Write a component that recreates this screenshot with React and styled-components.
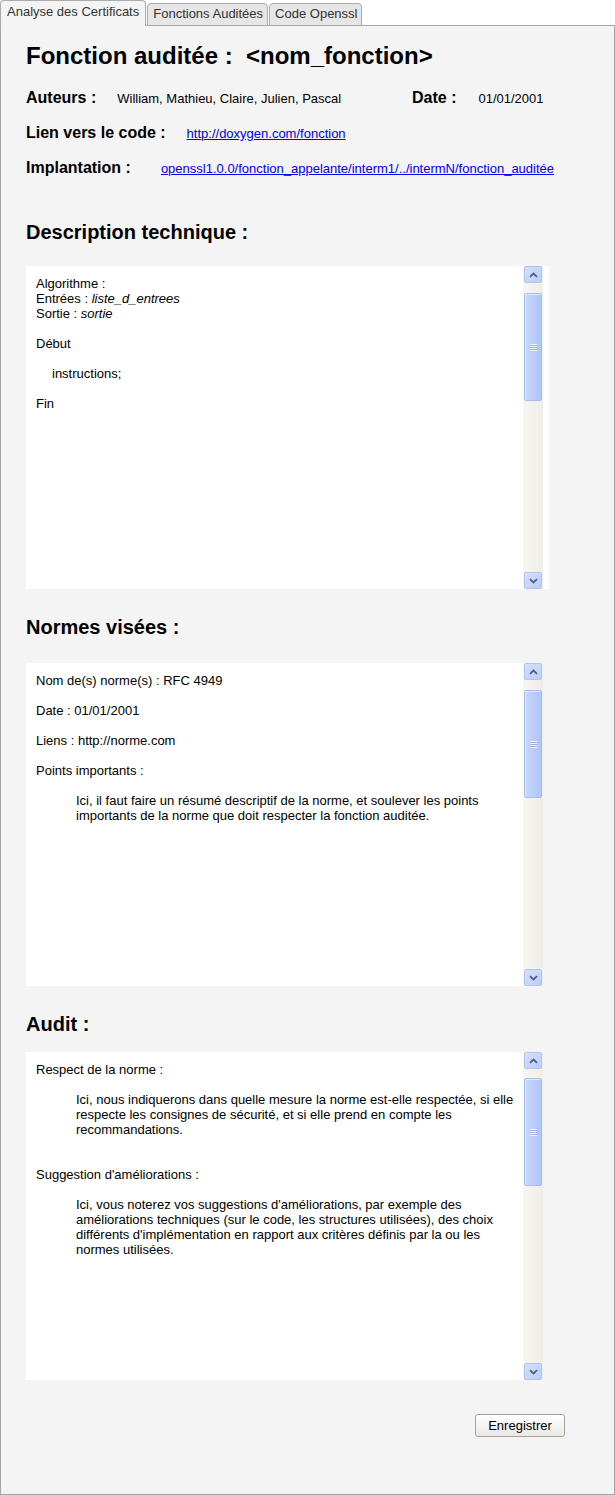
import React from "react";
import styled, { createGlobalStyle } from "styled-components";

const GlobalStyle = createGlobalStyle`
  html, body { margin: 0; padding: 0; background: #ffffff; }
  body { font-family: "Liberation Sans", Arial, sans-serif; color: #000; }
  * { box-sizing: border-box; }
`;

const Page = styled.div`
  width: 615px;
`;

const TabBar = styled.div`
  display: flex;
  align-items: flex-end;
  height: 26px;
  position: relative;
  z-index: 1;
  margin-bottom: -1px;
`;

const Tab = styled.div`
  height: ${(p) => (p.$active ? "26px" : "23px")};
  padding: 0 ${(p) => (p.$active ? "6px" : "4px")} 0 ${(p) => (p.$active ? "6px" : "5px")};
  border: 1px solid #aaaaaa;
  border-bottom: ${(p) => (p.$active ? "none" : "1px solid #aaaaaa")};
  border-radius: 4px 4px 0 0;
  background: ${(p) => (p.$active ? "#f4f4f4" : "#e6e6e6")};
  font-size: 13px;
  line-height: ${(p) => (p.$active ? "22px" : "20px")};
  color: #333;
  white-space: nowrap;
  margin-left: ${(p) => (p.$first ? "0" : "1px")};
`;

const Panel = styled.div`
  background: #f4f4f4;
  border: 1px solid #a5a5a5;
  height: 1470px;
  padding: 0 0 0 25px;
  display: flex;
  flex-direction: column;
`;

const Title = styled.h1`
  margin: 16px 0 0;
  font-size: 24px;
  line-height: 28px;
  font-weight: bold;
  white-space: pre;
`;

const MetaList = styled.div`
  display: flex;
  flex-direction: column;
  gap: 15px;
  margin-top: 18px;
`;

const MetaRow = styled.div`
  display: grid;
  grid-template-columns: ${(p) => p.$cols || "auto"};
  align-items: baseline;
  height: 20px;
  line-height: 20px;
`;

const MetaItem = styled.div`
  display: flex;
  align-items: baseline;
`;

const Label = styled.span`
  font-size: 16px;
  font-weight: bold;
`;

const Value = styled.span`
  font-size: 13px;
  margin-left: ${(p) => p.$gap}px;
`;

const Link = styled.a`
  font-size: 13px;
  color: #0000ee;
  text-decoration: underline;
  margin-left: ${(p) => p.$gap}px;
`;

const SectionTitle = styled.h2`
  margin: ${(p) => p.$mt}px 0 0;
  font-size: 20px;
  line-height: 24px;
  font-weight: bold;
`;

const TextBox = styled.div`
  display: flex;
  margin-top: ${(p) => p.$mt}px;
  width: ${(p) => (p.$wide ? 523 : 517)}px;
  height: ${(p) => p.$h}px;
  background: #ffffff;
  padding-right: ${(p) => (p.$wide ? 6 : 0)}px;
`;

const Content = styled.div`
  flex: 1;
  overflow: hidden;
  padding: 10px 0 0 10px;
  font-size: 13px;
  line-height: 15px;
`;

const Para = styled.p`
  margin: 0 0 ${(p) => (p.$blank ? 0 : 15)}px;
  min-height: 15px;
`;

const Quote = styled.blockquote`
  margin: 0 0 15px 40px;
`;

const Indent = styled.span`
  padding-left: 16px;
`;

const ScrollTrack = styled.div`
  width: 20px;
  flex: none;
  display: flex;
  flex-direction: column;
  background: linear-gradient(to right, #f7f6f2, #efede6);
`;

const ScrollBtn = styled.div`
  height: 17px;
  margin: 0 1px;
  border: 1px solid #b3c4ea;
  border-radius: 2px;
  background: linear-gradient(to bottom right, #d3e0fd, #bccdf7);
  display: flex;
  align-items: center;
  justify-content: center;
`;

const Thumb = styled.div`
  margin: ${(p) => p.$offset}px 1px 0;
  height: 108px;
  border: 1px solid #a9bce8;
  border-radius: 2px;
  background: linear-gradient(to right, #c9d8fc, #b8cbf9 60%, #b1c5f6);
  box-shadow: inset 1px 1px 0 #dfe8ff;
  display: flex;
  align-items: center;
  justify-content: center;
`;

const Grip = styled.div`
  width: 7px;
  height: 7px;
  background: repeating-linear-gradient(
    to bottom,
    #eef3ff 0,
    #eef3ff 1px,
    #9fb4e4 1px,
    #9fb4e4 2px
  );
`;

const Spacer = styled.div`
  flex: 1;
`;

const Footer = styled.div`
  display: flex;
  justify-content: flex-end;
  margin-top: 34px;
  padding-right: 49px;
`;

const Button = styled.button`
  width: 90px;
  height: 23px;
  border: 1px solid #a7a297;
  border-radius: 3px;
  background: linear-gradient(to bottom, #ffffff, #e9e8e5);
  font-family: "Liberation Sans", Arial, sans-serif;
  font-size: 13px;
  color: #000;
  padding: 0;
`;

const Chevron = ({ down }) => (
  <svg width="9" height="6" viewBox="0 0 9 6">
    <path
      d={down ? "M1 1.2 L4.5 4.5 L8 1.2" : "M1 4.8 L4.5 1.5 L8 4.8"}
      fill="none"
      stroke="#4a5d86"
      strokeWidth="1.8"
    />
  </svg>
);

const Scrollbar = ({ offset = 10 }) => (
  <ScrollTrack>
    <ScrollBtn>
      <Chevron />
    </ScrollBtn>
    <Thumb $offset={offset}>
      <Grip />
    </Thumb>
    <Spacer />
    <ScrollBtn>
      <Chevron down />
    </ScrollBtn>
  </ScrollTrack>
);

export default function App() {
  return (
    <Page>
      <GlobalStyle />
      <TabBar>
        <Tab $active $first>Analyse des Certificats</Tab>
        <Tab>Fonctions Auditées</Tab>
        <Tab>Code Openssl</Tab>
      </TabBar>
      <Panel>
        <Title>{"Fonction auditée :  <nom_fonction>"}</Title>
        <MetaList>
          <MetaRow $cols="386px auto">
            <MetaItem>
              <Label>Auteurs :</Label>
              <Value $gap={21}>William, Mathieu, Claire, Julien, Pascal</Value>
            </MetaItem>
            <MetaItem>
              <Label>Date :</Label>
              <Value $gap={22}>01/01/2001</Value>
            </MetaItem>
          </MetaRow>
          <MetaRow>
            <MetaItem>
              <Label>Lien vers le code :</Label>
              <Link $gap={21} href="#">http://doxygen.com/fonction</Link>
            </MetaItem>
          </MetaRow>
          <MetaRow>
            <MetaItem>
              <Label>Implantation :</Label>
              <Link $gap={30} href="#">
                openssl1.0.0/fonction_appelante/interm1/../intermN/fonction_auditée
              </Link>
            </MetaItem>
          </MetaRow>
        </MetaList>

        <SectionTitle $mt={42}>Description technique :</SectionTitle>
        <TextBox $mt={22} $h={323} $wide>
          <Content>
            Algorithme :<br />
            Entrées : <i>liste_d_entrees</i>
            <br />
            Sortie : <i>sortie</i>
            <br />
            <br />
            Début
            <br />
            <br />
            <Indent>instructions;</Indent>
            <br />
            <br />
            Fin
          </Content>
          <Scrollbar offset={10} />
        </TextBox>

        <SectionTitle $mt={26}>Normes visées :</SectionTitle>
        <TextBox $mt={24} $h={323}>
          <Content>
            <Para>Nom de(s) norme(s) : RFC 4949</Para>
            <Para>Date : 01/01/2001</Para>
            <Para>Liens : http://norme.com</Para>
            <Para>Points importants :</Para>
            <Quote>
              Ici, il faut faire un résumé descriptif de la norme, et soulever les points
              importants de la norme que doit respecter la fonction auditée.
            </Quote>
          </Content>
          <Scrollbar offset={10} />
        </TextBox>

        <SectionTitle $mt={26}>Audit :</SectionTitle>
        <TextBox $mt={16} $h={328}>
          <Content>
            <Para>Respect de la norme :</Para>
            <Quote>
              Ici, nous indiquerons dans quelle mesure la norme est-elle respectée, si elle
              respecte les consignes de sécurité, et si elle prend en compte les
              recommandations.
            </Quote>
            <Para $blank>&nbsp;</Para>
            <Para>Suggestion d'améliorations :</Para>
            <Quote>
              Ici, vous noterez vos suggestions d'améliorations, par exemple des
              améliorations techniques (sur le code, les structures utilisées), des choix
              différents d'implémentation en rapport aux critères définis par la ou les
              normes utilisées.
            </Quote>
          </Content>
          <Scrollbar offset={9} />
        </TextBox>

        <Footer>
          <Button>Enregistrer</Button>
        </Footer>
      </Panel>
    </Page>
  );
}
